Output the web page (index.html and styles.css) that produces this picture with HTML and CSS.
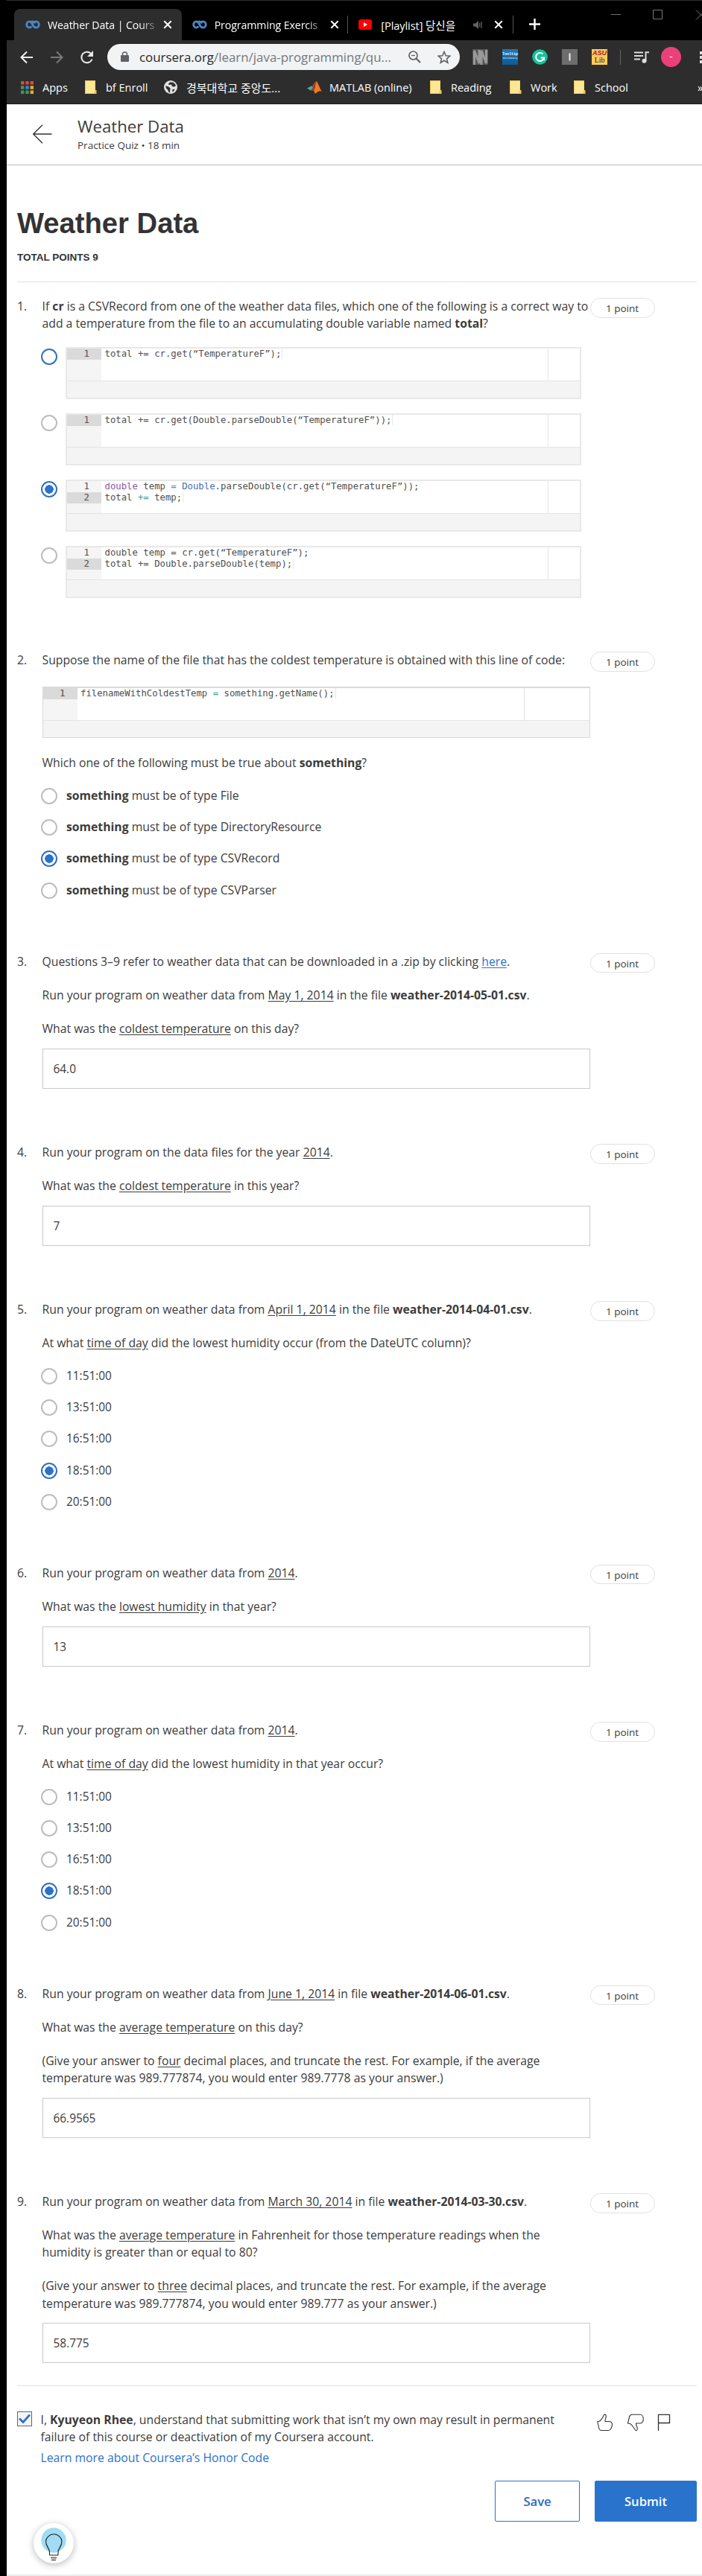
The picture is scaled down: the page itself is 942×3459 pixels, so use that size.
FILE: index.html
```html
<!DOCTYPE html>
<html lang="en">
<head>
<meta charset="utf-8">
<title>Weather Data | Coursera</title>
<link rel="stylesheet" href="styles.css">
</head>
<body>
<svg width="0" height="0" class="defs" aria-hidden="true">
  <symbol id="infinity" viewBox="0 0 20 12"><path d="M13.2 4.2C12.3 2.8 11 1.7 9.4 1.9C8.5 2 8 2.500 7.500 3M8.400 8.300C7.600 9.500 6.500 10.200 5.300 10.100C3.300 10 1.700 8.200 1.700 6S3.300 1.900 5.300 1.900C8.700 1.900 9.600 6 11 8.200C11.900 9.500 13 10.100 14.500 10.100C16.700 10.100 18.300 8.200 18.300 6S16.700 1.900 14.500 1.900C12.900 1.900 11.700 3 11 4.300" fill="none" stroke="#4a86c2" stroke-width="2.900"/></symbol>
  <symbol id="close" viewBox="0 0 12 12"><path d="M1.300 1.300L10.700 10.700M10.700 1.300L1.300 10.700" stroke="#fff" stroke-width="2" fill="none"/></symbol>
  <symbol id="folder" viewBox="0 0 16 18"><path d="M0 0H14V13H15.500V18H0Z" fill="#e9c858"/><path d="M1 1H13.500V13L12 17H1Z" fill="#ffe694"/></symbol>
</svg>
<div class="window">
  <div class="tabs">
    <div class="tab active"><svg class="fav"><use href="#infinity"/></svg><span class="tab-title">Weather Data | Cours</span><svg class="x"><use href="#close"/></svg></div>
    <div class="tab second"><svg class="fav"><use href="#infinity"/></svg><span class="tab-title">Programming Exercis</span><svg class="x"><use href="#close"/></svg></div>
    <div class="tab third"><svg class="yt" viewBox="0 0 18 14"><rect width="18" height="14" rx="3.500" fill="#f00"/><path d="M7 4L12 7L7 10Z" fill="#fff"/></svg><span class="tab-title">[Playlist] 당신을</span><svg class="speaker" viewBox="0 0 13 11"><path d="M0 3.500H3L7 0V11L3 7.500H0Z" fill="#606468"/><path d="M8.800 2.500V8.500M11.200 1V10" stroke="#606468" stroke-width="1.200"/></svg><svg class="x"><use href="#close"/></svg></div>
    <svg class="plus" viewBox="0 0 15 15"><path d="M7.500 0V15M0 7.500H15" stroke="#fff" stroke-width="2.400"/></svg>
    <svg class="winctl" viewBox="0 0 122 14"><path d="M0 6.500H13M56.500 .5H68.500V12.500H56.500ZM114 .5L127 13.500M127 .5L114 13.500" fill="none" stroke="#777" stroke-width="1"/></svg>
  </div>
  <div class="toolbar">
    <svg class="nav" viewBox="0 0 100 20">
      <path d="M17 10H2M9 2.500L1.500 10L9 17.500" fill="none" stroke="#f1f1f1" stroke-width="2"/>
      <path d="M41 10H56M49 2.500L56.500 10L49 17.500" fill="none" stroke="#7a7a7a" stroke-width="2"/>
      <path d="M95 5A7.300 7.300 0 1 0 96.500 12.500" fill="none" stroke="#e8e8e8" stroke-width="2.100"/><path d="M98 1V9H90Z" fill="#e8e8e8"/>
    </svg>
    <div class="omnibox">
      <svg class="lock" viewBox="0 0 11 14"><path d="M2.500 6V4A3 3 0 0 1 8.500 4V6" fill="none" stroke="#5f6368" stroke-width="1.500"/><rect y="5" width="11" height="9" rx="1" fill="#5f6368"/></svg>
      <span class="url"><b>coursera.org</b>/learn/java-programming/qu...</span>
      <svg class="mag" viewBox="0 0 17 17"><circle cx="6.500" cy="6.500" r="5.500" fill="none" stroke="#5f6368" stroke-width="1.700"/><path d="M4 6.500H9" stroke="#5f6368" stroke-width="1.300"/><path d="M10.500 10.500L16 16" stroke="#5f6368" stroke-width="2.200"/></svg>
      <svg class="star" viewBox="0 0 18 18"><path d="M9 1.500L11.200 6.700L16.800 7.200L12.500 10.800L13.800 16.200L9 13.300L4.200 16.200L5.500 10.800L1.200 7.200L6.800 6.700Z" fill="none" stroke="#5f6368" stroke-width="1.600"/></svg>
    </div>
    <div class="extensions">
      <svg viewBox="0 0 21 21"><rect width="21" height="21" fill="#555"/><path d="M2.500 21V2L9 19V1M12 21V2L18.500 19V1" fill="none" stroke="#999" stroke-width="3"/></svg>
      <div class="ext tooltip-dict">Tooltip<small>Dictionary</small></div>
      <svg viewBox="0 0 21 21"><circle cx="10.500" cy="10.500" r="10.300" fill="#15c39a"/><path d="M14.500 6.500A5.500 5.500 0 1 0 16 11.500H11.500M16 11.500V15" fill="none" stroke="#fff" stroke-width="2"/></svg>
      <svg viewBox="0 0 21 21"><rect width="21" height="21" fill="#6d6d6d"/><path d="M10.500 5.500V15.500" stroke="#eee" stroke-width="2"/></svg>
      <div class="ext asu"><b>ASU</b><span>Lib</span></div>
    </div>
    <i class="bar"></i>
    <svg class="queue" viewBox="0 0 20 16"><path d="M0 1.500H12M0 6H12M0 10.500H8" stroke="#ddd" stroke-width="2"/><path d="M15.500 13V1.200H20" fill="none" stroke="#ddd" stroke-width="2"/><circle cx="13.500" cy="12.800" r="3" fill="#ddd"/></svg>
    <div class="avatar">-</div>
    <svg class="dots" viewBox="0 0 3 16"><path d="M0 0H3V4H0ZM0 6H3V10H0ZM0 12H3V16H0Z" fill="#ddd"/></svg>
  </div>
  <div class="bookmarks">
    <div><svg class="i17" viewBox="0 0 17 17"><path d="M0 0H4.400V4.400H0ZM6.300 0H10.700V4.400H6.300ZM12.600 0H17V4.400H12.600Z" fill="#dd4b3e"/><path d="M0 6.300H4.400V10.700H0ZM0 12.600H4.400V17H0ZM6.300 12.600H10.700V17H6.300Z" fill="#3a9a5c"/><path d="M6.300 6.300H10.700V10.700H6.300Z" fill="#3f85e8"/><path d="M12.600 6.300H17V10.700H12.600ZM12.600 12.600H17V17H12.600Z" fill="#e9ad2c"/></svg><span>Apps</span></div>
    <div><svg class="fold"><use href="#folder"/></svg><span>bf Enroll</span></div>
    <div><svg class="i18" viewBox="0 0 18 18"><circle cx="9" cy="9" r="9" fill="#e3e3e3"/><path d="M2 7C5 8.500 6 7.500 8.500 10.500C9 12 7.500 13 8.500 16.500L6 15.500C6 13 4.500 12.500 3 10.500ZM8 2.500C6.500 4 5.500 4.500 6.500 6C8 6.500 9 5 10.500 5.500C9.500 8 12.500 9 15 8L16 6.500L14.500 4.500L12 2.500ZM11 12.500L14.500 11.500L13.500 14L11.500 15.500Z" fill="#303030"/></svg><span class="korean">경북대학교 중앙도...</span></div>
    <div><svg class="matlab" viewBox="0 0 20 17"><path d="M0 9.500L6 6.500L8.500 8.500L5 12.500Z" fill="#4ba6bd"/><path d="M6 6.500C8 6 10 0 12.500 0L9 13L5 12.500L8.500 8.500Z" fill="#a3401c"/><path d="M12.500 0C15 2 17 10 20 14C17 12.500 15 13.500 11 17L9 13C10.500 11 11 5 12.500 0Z" fill="#ee7a23"/></svg><span class="ml">MATLAB (online)</span></div>
    <div><svg class="fold"><use href="#folder"/></svg><span>Reading</span></div>
    <div><svg class="fold"><use href="#folder"/></svg><span>Work</span></div>
    <div><svg class="fold"><use href="#folder"/></svg><span>School</span></div>
    <div>»</div>
  </div>

  <header>
    <svg class="back" viewBox="0 0 26 26"><path d="M25.500 13H1M13 .7L.7 13L13 25.300" fill="none" stroke="#333" stroke-width="1.400"/></svg>
    <div><div class="crumb">Weather Data</div><div class="kind">Practice Quiz • 18 min</div></div>
  </header>

  <main>
    <h1>Weather Data</h1>
    <div class="total">TOTAL POINTS 9</div>
    <div class="questions">
      <section class="q code-choices">
        <div class="num">1.</div>
        <div class="body">
          <p>If <b>cr</b> is a CSVRecord from one of the weather data files, which one of the following is a correct way to<br>add a temperature from the file to an accumulating double variable named <b>total</b>?</p>
          <div class="code-options">
            <div class="code-option"><i class="radio hover"></i><div class="editor"><div class="area"><div class="gutter"><span class="on">1</span></div><pre><span class="caret">total += cr.get(“TemperatureF”);</span></pre></div></div></div>
            <div class="code-option"><i class="radio"></i><div class="editor"><div class="area"><div class="gutter"><span class="on">1</span></div><pre><span class="caret">total += cr.get(Double.parseDouble(“TemperatureF”));</span></pre></div></div></div>
            <div class="code-option"><i class="radio on"></i><div class="editor"><div class="area"><div class="gutter"><span>1</span><span class="on">2</span></div><pre><em>double</em> temp <s>=</s> <u>Double</u>.parseDouble(cr.get(“TemperatureF”));
<span class="caret">total <s>+=</s> temp;</span></pre></div></div></div>
            <div class="code-option"><i class="radio"></i><div class="editor"><div class="area"><div class="gutter"><span>1</span><span class="on">2</span></div><pre>double temp = cr.get(“TemperatureF”);
<span class="caret">total += Double.parseDouble(temp);</span></pre></div></div></div>
          </div>
        </div>
        <div class="pill">1 point</div>
      </section>
      <section class="q choices">
        <div class="num">2.</div>
        <div class="body">
          <p>Suppose the name of the file that has the coldest temperature is obtained with this line of code:</p>
          <div class="editor wide"><div class="area"><div class="gutter"><span class="on">1</span></div><pre><span class="caret">filenameWithColdestTemp <s>=</s> something.getName();</span></pre></div></div>
          <p>Which one of the following must be true about <b>something</b>?</p>
          <div class="options">
            <label><i class="radio"></i><span><b>something</b> must be of type File</span></label>
            <label><i class="radio"></i><span><b>something</b> must be of type DirectoryResource</span></label>
            <label><i class="radio on"></i><span><b>something</b> must be of type CSVRecord</span></label>
            <label><i class="radio"></i><span><b>something</b> must be of type CSVParser</span></label>
          </div>
        </div>
        <div class="pill">1 point</div>
      </section>
      <section class="q">
        <div class="num">3.</div>
        <div class="body">
          <p>Questions 3–9 refer to weather data that can be downloaded in a .zip by clicking <a class="here">here</a>.</p>
          <p>Run your program on weather data from <u>May 1, 2014</u> in the file <b>weather-2014-05-01.csv</b>.</p>
          <p>What was the <u>coldest temperature</u> on this day?</p>
          <div class="input">64.0</div>
        </div>
        <div class="pill">1 point</div>
      </section>
      <section class="q">
        <div class="num">4.</div>
        <div class="body">
          <p>Run your program on the data files for the year <u>2014</u>.</p>
          <p>What was the <u>coldest temperature</u> in this year?</p>
          <div class="input">7</div>
        </div>
        <div class="pill">1 point</div>
      </section>
      <section class="q choices">
        <div class="num">5.</div>
        <div class="body">
          <p>Run your program on weather data from <u>April 1, 2014</u> in the file <b>weather-2014-04-01.csv</b>.</p>
          <p>At what <u>time of day</u> did the lowest humidity occur (from the DateUTC column)?</p>
          <div class="options times">
            <label><i class="radio"></i><span>11:51:00</span></label>
            <label><i class="radio"></i><span>13:51:00</span></label>
            <label><i class="radio"></i><span>16:51:00</span></label>
            <label><i class="radio on"></i><span>18:51:00</span></label>
            <label><i class="radio"></i><span>20:51:00</span></label>
          </div>
        </div>
        <div class="pill">1 point</div>
      </section>
      <section class="q">
        <div class="num">6.</div>
        <div class="body">
          <p>Run your program on weather data from <u>2014</u>.</p>
          <p>What was the <u>lowest humidity</u> in that year?</p>
          <div class="input">13</div>
        </div>
        <div class="pill">1 point</div>
      </section>
      <section class="q choices">
        <div class="num">7.</div>
        <div class="body">
          <p>Run your program on weather data from <u>2014</u>.</p>
          <p>At what <u>time of day</u> did the lowest humidity in that year occur?</p>
          <div class="options times">
            <label><i class="radio"></i><span>11:51:00</span></label>
            <label><i class="radio"></i><span>13:51:00</span></label>
            <label><i class="radio"></i><span>16:51:00</span></label>
            <label><i class="radio on"></i><span>18:51:00</span></label>
            <label><i class="radio"></i><span>20:51:00</span></label>
          </div>
        </div>
        <div class="pill">1 point</div>
      </section>
      <section class="q">
        <div class="num">8.</div>
        <div class="body">
          <p>Run your program on weather data from <u>June 1, 2014</u> in file <b>weather-2014-06-01.csv</b>.</p>
          <p>What was the <u>average temperature</u> on this day?</p>
          <p>(Give your answer to <u>four</u> decimal places, and truncate the rest. For example, if the average<br>temperature was 989.777874, you would enter 989.7778 as your answer.)</p>
          <div class="input">66.9565</div>
        </div>
        <div class="pill">1 point</div>
      </section>
      <section class="q last">
        <div class="num">9.</div>
        <div class="body">
          <p>Run your program on weather data from <u>March 30, 2014</u> in file <b>weather-2014-03-30.csv</b>.</p>
          <p>What was the <u>average temperature</u> in Fahrenheit for those temperature readings when the<br>humidity is greater than or equal to 80?</p>
          <p>(Give your answer to <u>three</u> decimal places, and truncate the rest. For example, if the average<br>temperature was 989.777874, you would enter 989.777 as your answer.)</p>
          <div class="input">58.775</div>
        </div>
        <div class="pill">1 point</div>
      </section>
    </div>
    <div class="honor">
      <div class="check"><svg viewBox="0 0 16 14"><path d="M1 6.500L6 11.500L15 1.500" fill="none" stroke="#2a73cc" stroke-width="2.800"/></svg></div>
      <div class="pledge">I, <b>Kyuyeon Rhee</b>, understand that submitting work that isn’t my own may result in permanent<br>failure of this course or deactivation of my Coursera account.<div class="learn">Learn more about Coursera’s Honor Code</div></div>
      <svg class="feedback" viewBox="0 0 100 24" fill="none" stroke="#333" stroke-width="1.100">
        <path d="M.8 10.500L2.500 18.500C3 21.300 4.300 22.500 6 22.500H15.500C18.300 22.500 20.500 17.500 20.500 14.800C20.500 12 18.800 10.500 16 10.500H11C10.500 8.300 12.600 5.200 12.300 2.800C12 .8 10 .6 9.300 1.800C8.500 5 5.500 8 4.500 9.500C3.500 10.500 2 10.500 .8 10.500Z"/>
        <path d="M41.500 13L43.500 4.500C44 2.300 45.300 1.300 47 1.300H58C60.500 1.300 62.300 4 62.300 7.500C62.300 11 60 13 57 13H52.500C52.300 15.500 54.800 18.500 54.300 21C54 22.800 52.300 23 51.500 22C50 19 47.300 16.500 46.500 15C45.500 13.500 43.500 13 41.500 13Z"/>
        <path d="M82.500 23V1.300H97.500V12.500H82.500" stroke-width="1.300"/>
      </svg>
    </div>
    <div class="actions"><div class="btn save">Save</div><div class="btn submit">Submit</div></div>
  </main>
  <div class="help"><svg viewBox="0 0 54 54"><circle cx="27" cy="23" r="16.700" fill="#a0dcf3"/><path d="M21.500 42V38.500C21.500 34 16.500 31.500 16.500 24.500A10.800 10.800 0 0 1 38 24.500C38 31.500 33 34 33 38.500V42C33 42.600 32.500 43 32 43H22.500C22 43 21.500 42.600 21.500 42Z" fill="none" stroke="#1d1d1d" stroke-width="1.100"/><path d="M23 46.500H31M24 49.500H30" stroke="#777" stroke-width="1.800"/></svg></div>
</div>
</body>
</html>
```
FILE: styles.css
```css
* { box-sizing: border-box; }
body { margin: 0; background: #000; font-family: "Open Sans", "Noto Sans CJK KR", sans-serif; color: #3c3c3c; }
.defs { position: absolute; }
svg { display: block; flex: none; }
.window { position: relative; margin-left: 9px; width: 933px; height: 3459px; background: #fff; overflow: hidden; border-bottom: 2px solid #ececec; }

/* browser chrome */
.tabs { height: 54px; background: #000; border-top: 1px solid #2f2f2f; display: flex; align-items: flex-start; color: #fff; font-size: 14.200px; letter-spacing: -.1px; }
.tab { display: flex; align-items: center; height: 42px; margin-top: 11px; white-space: nowrap; }
.active { width: 225px; margin-left: 10px; padding-left: 15px; background: #2d2d2d; border-radius: 8px 8px 0 0; }
.second { width: 224px; padding-left: 14px; border-right: 1px solid #555; height: 24px; margin-top: 20px; }
.third { width: 222px; padding-left: 14px; border-right: 1px solid #555; height: 24px; margin-top: 20px; }
.fav { width: 20px; height: 12px; }
.tab-title { width: 147px; margin: 0 6px 0 10px; -webkit-mask-image: linear-gradient(90deg, #000 84%, rgba(0,0,0,.15)); mask-image: linear-gradient(90deg, #000 84%, rgba(0,0,0,.15)); }
.third .tab-title { width: 115px; margin: 0 9px 0 12px; font-size: 14.600px; -webkit-mask-image: none; mask-image: none; }
.x { width: 12px; height: 12px; margin-left: 2px; }
.yt { width: 18px; height: 14px; }
.speaker { width: 13px; height: 11px; margin-right: 13px; }
.plus { width: 15px; height: 15px; margin: 24px 0 0 21px; }
.winctl { width: 122px; height: 14px; margin: 12px 0 0 95px; }
.toolbar { height: 45px; background: #2d2d2d; display: flex; align-items: center; }
.nav { width: 100px; height: 20px; margin-left: 18px; }
.omnibox { width: 475px; height: 35px; margin: 0 17px; border-radius: 18px; background: #f1f3f4; display: flex; align-items: center; padding-left: 18px; }
.lock { width: 11px; height: 14px; margin-bottom: 1px; }
.url { width: 338px; margin: 0 23px 0 14px; white-space: nowrap; font-size: 16.900px; line-height: 24px; color: #74787c; }
.url b { font-weight: 400; color: #25282b; }
.mag { width: 17px; height: 17px; margin-right: 22px; }
.star { width: 18px; height: 18px; }
.extensions { display: flex; gap: 19px; }
.extensions svg, .ext { width: 21px; height: 21px; }
.tooltip-dict { background: linear-gradient(#1f78b8, #0b5c98); color: #fff; font: bold 5px/6px "Liberation Mono", monospace; padding-top: 4px; text-align: center; }
.tooltip-dict small { display: block; font-size: 3.300px; line-height: 5px; font-weight: 400; }
.asu { background: #ffcb5c; display: flex; flex-direction: column; align-items: center; line-height: 10px; }
.asu b { color: #9a1239; font: italic bold 9px/10px "Liberation Sans", sans-serif; }
.asu span { color: #2b2113; font-family: "Liberation Serif", serif; font-size: 10px; }
.bar { width: 1px; height: 20px; background: #666; margin: 0 18px 0 17px; }
.queue { width: 20px; height: 16px; }
.avatar { width: 27px; height: 27px; border-radius: 50%; background: #ec407a; color: #fff; font-size: 14px; line-height: 26px; text-align: center; margin: 0 25px 0 16px; }
.dots { width: 3px; height: 16px; }
.bookmarks { height: 41px; background: #2d2d2d; border-bottom: 1px solid #191919; padding-left: 19px; display: grid; grid-template-columns: 86px 106px 192px 165px 107px 86px 166px 20px; color: #fff; font-size: 14.500px; white-space: nowrap; }
.bookmarks div { display: flex; align-items: center; height: 36px; }
.bookmarks span { margin-left: 12px; }
.bookmarks .korean { font-size: 15px; }
.bookmarks .ml { margin-left: 10px; }
.i17 { width: 17px; height: 17px; }
.i18 { width: 18px; height: 18px; }
.matlab { width: 20px; height: 17px; }
.fold { width: 16px; height: 18px; }

/* quiz header */
header { height: 82px; border-bottom: 1px solid #bdbdbd; display: flex; padding: 27px 0 0 35px; }
.back { width: 26px; height: 26px; }
header > div { margin: -12px 0 0 34px; }
.crumb { font-size: 22.200px; line-height: 30px; }
.kind { font-size: 13.500px; line-height: 20px; }

main { padding: 0 7px 0 14px; font-size: 15.750px; line-height: 23.100px; white-space: nowrap; }
h1 { margin: 54px 0 0; font: bold 38.200px/48px "Liberation Sans", sans-serif; color: #333; }
.total { margin-top: 10px; font: bold 13.500px/24px "Liberation Sans", sans-serif; color: #333; }
.questions { margin-top: 20px; border-top: 1px solid #e1e1e1; border-bottom: 1px solid #e1e1e1; padding-top: 21px; }
.q { display: grid; grid-template-columns: 33.500px 735px 87px; padding-bottom: 74.500px; align-items: start; }
.q.code-choices { padding-bottom: 73px; }
.q.choices { padding-bottom: 63px; }
.q.last { padding-bottom: 30px; }
p { margin: 0; }
p + p { margin-top: 22px; }
u { text-underline-offset: 2px; }
.pill { height: 26.500px; border: 1px solid #e1e1e1; border-radius: 14px; font-size: 13.500px; line-height: 27px; text-align: center; }
.here { color: #2a73cc; text-decoration: underline; text-underline-offset: 2px; }
.input { margin-top: 14.700px; height: 53.900px; border: 1px solid #c7cacc; padding-left: 14px; font-size: 15.400px; line-height: 53px; }
.radio { width: 22px; height: 22px; border-radius: 50%; border: 2px solid #bdbdbd; flex: none; }
.radio.hover, .radio.on { border-color: #3470bd; }
.radio.on { background: radial-gradient(circle, #2a73cc 5.500px, #fff 6px); }
.options { margin-top: 11.700px; }
.options label { display: flex; align-items: center; height: 42.150px; margin-left: -1.500px; gap: 12px; }
.options span { margin-top: -1px; }
.times { font-size: 15.400px; }

/* code editors */
.code-options { display: flex; flex-direction: column; gap: 18.400px; margin: 19.600px 0 -1px -1.500px; }
.code-option { display: flex; gap: 11px; align-items: flex-start; }
.code-option .radio { margin-top: 2px; }
.editor { width: 692px; height: 70.600px; border: 2px solid #e8e8e8; background: #f4f4f4; }
.area { height: 44px; background: linear-gradient(90deg, transparent 645px, #e6e7ea 645px, #e6e7ea 646.500px, transparent 646.500px), #fff; border-bottom: 1px solid #e4e4e4; display: flex; font: 12.300px/15px "DejaVu Sans Mono", monospace; color: #505050; }
.gutter { width: 46px; background: #f5f5f5; margin-right: 4.500px; }
.gutter span { display: block; text-align: right; padding-right: 16px; }
.gutter .on { background: #dadada; }
pre { margin: 0; font: inherit; }
.caret { border-right: 1px solid #e6e6e6; padding-right: 1px; }
pre em { font-style: normal; color: #8959a8; }
pre s { text-decoration: none; color: #3e999f; }
pre u { text-decoration: none; color: #4271ae; }
.wide { width: 735px; height: 68.700px; border: 1px solid #d9d9d9; border-top-width: 2px; margin: 23.400px 0 22.800px; }
.wide .area { background: linear-gradient(90deg, transparent 645px, #dcdfe0 645px, #dcdfe0 646px, transparent 646px), #fff; }

.honor { display: flex; margin-top: 34px; }
.check { width: 20px; height: 20px; border: 1px solid #666; background: #f4f4f4; }
.check svg { width: 16px; height: 14px; margin: 2px 1px; }
.pledge { width: 746px; margin-left: 11.500px; }
.learn { margin-top: 5px; color: #2a73cc; }
.feedback { width: 100px; height: 24px; margin-top: 3px; }
.actions { display: flex; justify-content: flex-end; gap: 20px; margin-top: 18.500px; }
.btn { height: 55px; border: 1px solid #2a73cc; border-radius: 2px; line-height: 54px; text-align: center; font-weight: 600; font-size: 16.600px; color: #2a6abf; }
.save { width: 114px; }
.submit { width: 137px; background: #2a73cc; color: #fff; }
.help { position: absolute; left: 36px; top: 3388px; width: 54px; height: 54px; border-radius: 50%; background: #fff; box-shadow: 0 2px 10px rgba(0,0,0,.28); }
.help svg { width: 54px; height: 54px; }
```
